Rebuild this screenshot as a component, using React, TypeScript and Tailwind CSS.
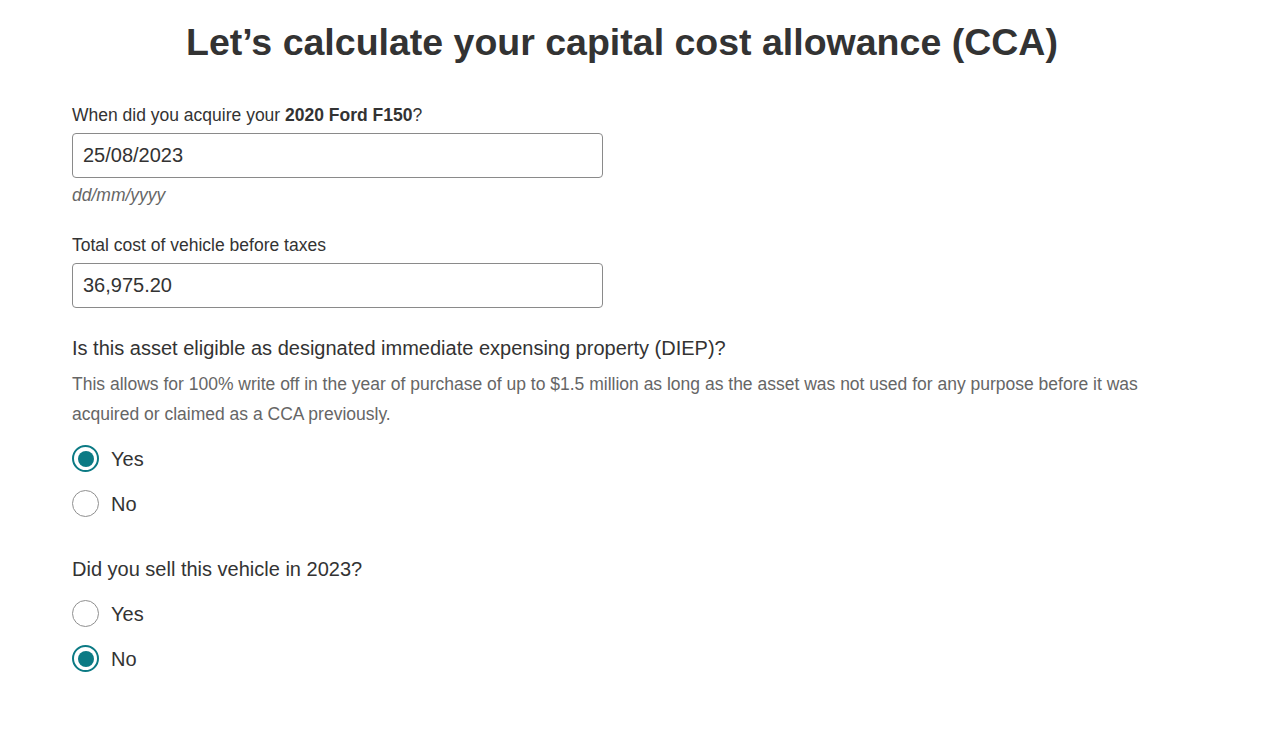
import { useState } from 'react'

interface RadioGroupProps {
  name: string
  value: string
  onChange: (v: string) => void
}

function RadioGroup({ name, value, onChange }: RadioGroupProps) {
  return (
    <div className="flex flex-col">
      {['Yes', 'No'].map((opt) => {
        const checked = value === opt
        return (
          <label key={opt} className="flex items-center h-[45px] cursor-pointer">
            <input
              type="radio"
              name={name}
              className="sr-only"
              checked={checked}
              onChange={() => onChange(opt)}
            />
            <span
              className={`w-[27px] h-[27px] rounded-full flex items-center justify-center shrink-0 ${
                checked ? 'border-2 border-[#0b7a84]' : 'border border-[#8f8f8f]'
              }`}
            >
              {checked && <span className="w-[16px] h-[16px] rounded-full bg-[#0b7a84]" />}
            </span>
            <span className="ml-[12px] text-[20px] leading-[28px] text-[#333]">{opt}</span>
          </label>
        )
      })}
    </div>
  )
}

export default function App() {
  const [date, setDate] = useState('25/08/2023')
  const [cost, setCost] = useState('36,975.20')
  const [diep, setDiep] = useState('Yes')
  const [sold, setSold] = useState('No')

  return (
    <div className="min-h-screen bg-white font-['Liberation_Sans',Arial,sans-serif] text-[#333]">
      <div className="w-[1100px] ml-[72px] pt-[20px] pb-10">
        <h1 className="text-center text-[37.5px] leading-[44px] font-bold text-[#333]">
          Let’s calculate your capital cost allowance (CCA)
        </h1>

        {/* Acquisition date */}
        <div className="mt-[39px]">
          <label className="block text-[17.5px] leading-[24px]">
            When did you acquire your <span className="font-bold">2020 Ford F150</span>?
          </label>
          <input
            type="text"
            value={date}
            onChange={(e) => setDate(e.target.value)}
            className="mt-[6px] w-[531px] h-[45px] border border-[#8a8a8a] rounded-[4px] px-[10px] text-[20px] text-[#333] outline-none"
          />
          <p className="mt-[5px] text-[17.5px] leading-[24px] italic text-[#666]">dd/mm/yyyy</p>
        </div>

        {/* Cost */}
        <div className="mt-[26px]">
          <label className="block text-[17.5px] leading-[24px]">Total cost of vehicle before taxes</label>
          <input
            type="text"
            value={cost}
            onChange={(e) => setCost(e.target.value)}
            className="mt-[6px] w-[531px] h-[45px] border border-[#8a8a8a] rounded-[4px] px-[10px] text-[20px] text-[#333] outline-none"
          />
        </div>

        {/* DIEP */}
        <div className="mt-[26px]">
          <p className="text-[20px] leading-[28px]">
            Is this asset eligible as designated immediate expensing property (DIEP)?
          </p>
          <p className="mt-[7px] text-[17.5px] leading-[30px] text-[#666] w-[1080px]">
            This allows for 100% write off in the year of purchase of up to $1.5 million as long as the asset was not
            used for any purpose before it was acquired or claimed as a CCA previously.
          </p>
          <div className="mt-[7px]">
            <RadioGroup name="diep" value={diep} onChange={setDiep} />
          </div>
        </div>

        {/* Sold */}
        <div className="mt-[29px]">
          <p className="text-[20px] leading-[28px]">Did you sell this vehicle in 2023?</p>
          <div className="mt-[8px]">
            <RadioGroup name="sold" value={sold} onChange={setSold} />
          </div>
        </div>
      </div>
    </div>
  )
}
